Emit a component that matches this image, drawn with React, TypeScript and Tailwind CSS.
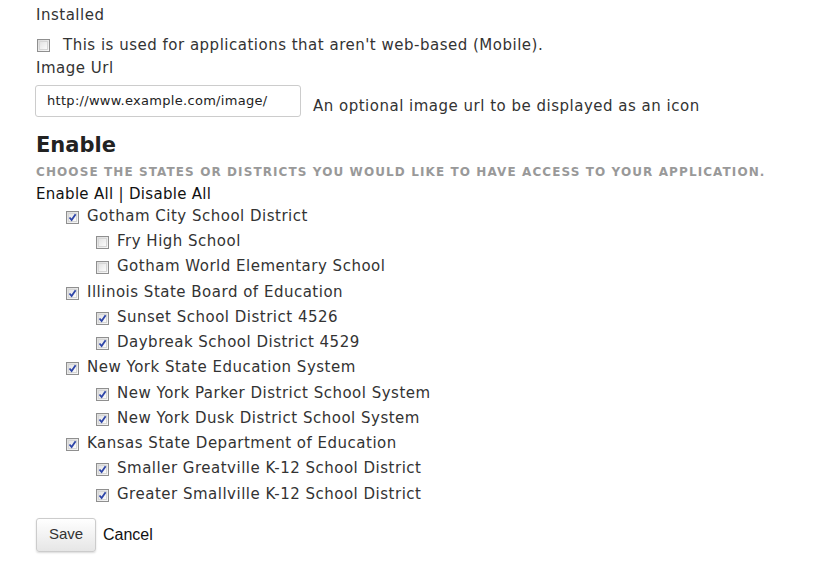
import React, { useState } from "react";

type School = { name: string; on: boolean };
type Group = { name: string; on: boolean; children: School[] };

const initialGroups: Group[] = [
  {
    name: "Gotham City School District",
    on: true,
    children: [
      { name: "Fry High School", on: false },
      { name: "Gotham World Elementary School", on: false },
    ],
  },
  {
    name: "Illinois State Board of Education",
    on: true,
    children: [
      { name: "Sunset School District 4526", on: true },
      { name: "Daybreak School District 4529", on: true },
    ],
  },
  {
    name: "New York State Education System",
    on: true,
    children: [
      { name: "New York Parker District School System", on: true },
      { name: "New York Dusk District School System", on: true },
    ],
  },
  {
    name: "Kansas State Department of Education",
    on: true,
    children: [
      { name: "Smaller Greatville K-12 School District", on: true },
      { name: "Greater Smallville K-12 School District", on: true },
    ],
  },
];

function Box({ checked, onClick }: { checked: boolean; onClick?: () => void }) {
  return (
    <span
      onClick={onClick}
      className="relative inline-flex h-[13px] w-[13px] shrink-0 cursor-default items-center justify-center border border-[#8f8f8f] bg-gradient-to-br from-[#dcdcdc] to-[#f8f8f8] p-[1px]"
    >
      <span className="block h-full w-full border border-[#d6d6d6] bg-gradient-to-br from-[#e4e4e4] to-[#fbfbfb]" />
      {checked && (
        <svg className="absolute left-[1px] top-[1px] h-[9px] w-[9px]" viewBox="0 0 9 9">
          <path d="M1.5 4.5 L3.6 7 L7.6 1.2" fill="none" stroke="#2e45a8" strokeWidth={1.8} />
        </svg>
      )}
    </span>
  );
}

export default function App() {
  const [installed, setInstalled] = useState(false);
  const [groups, setGroups] = useState<Group[]>(initialGroups);

  const setAll = (on: boolean) =>
    setGroups(groups.map((g) => ({ ...g, on, children: g.children.map((c) => ({ ...c, on })) })));

  const toggleGroup = (gi: number) =>
    setGroups(groups.map((g, i) => (i === gi ? { ...g, on: !g.on } : g)));

  const toggleChild = (gi: number, ci: number) =>
    setGroups(
      groups.map((g, i) =>
        i === gi
          ? { ...g, children: g.children.map((c, j) => (j === ci ? { ...c, on: !c.on } : c)) }
          : g
      )
    );

  return (
    <div className="min-h-[566px] bg-white pl-[36px] pt-[5px] font-['DejaVu_Sans',Verdana,sans-serif] text-[15px] tracking-[0.5px] text-[#333]">
      <div className="h-[20px] leading-[20px]">Installed</div>
      <div className="mt-[10px] flex h-[20px] items-center">
        <span className="ml-[1px]">
          <Box checked={installed} onClick={() => setInstalled(!installed)} />
        </span>
        <span className="ml-[13px] leading-[20px]">
          This is used for applications that aren't web-based (Mobile).
        </span>
      </div>
      <div className="mt-[3px] h-[20px] leading-[20px]">Image Url</div>

      <div className="mt-[6px] flex items-center">
        <input
          defaultValue="http://www.example.com/image/"
          className="-ml-[1px] h-[32px] w-[266px] rounded-[3px] border border-[#ccc] px-[11px] font-['DejaVu_Sans',Verdana,sans-serif] text-[13px] tracking-[0.3px] text-[#222] outline-none"
        />
        <span className="ml-[12px] mt-[11px] text-[#333]">An optional image url to be displayed as an icon</span>
      </div>

      <h2 className="mt-[14px] h-[26px] text-[21px] font-bold leading-[26px] tracking-normal text-[#222]">Enable</h2>
      <div className="mt-[6px] h-[16px] text-[12px] font-bold uppercase leading-[16px] tracking-[1.1px] text-[#999]">
        Choose the states or districts you would like to have access to your application.
      </div>
      <div className="mt-[4px] h-[20px] leading-[20px] tracking-[0.3px] text-[#111]">
        <span className="cursor-pointer" onClick={() => setAll(true)}>
          Enable All
        </span>{" "}
        |{" "}
        <span className="cursor-pointer" onClick={() => setAll(false)}>
          Disable All
        </span>
      </div>

      <div className="flex flex-col">
        {groups.map((g, gi) => (
          <div key={g.name} className="flex flex-col">
            <div className="flex h-[25.25px] items-center pl-[30px]">
              <span className="mt-[2px]">
                <Box checked={g.on} onClick={() => toggleGroup(gi)} />
              </span>
              <span className="ml-[8px]">{g.name}</span>
            </div>
            {g.children.map((c, ci) => (
              <div key={c.name} className="flex h-[25.25px] items-center pl-[60px]">
                <span className="mt-[2px]">
                  <Box checked={c.on} onClick={() => toggleChild(gi, ci)} />
                </span>
                <span className="ml-[8px]">{c.name}</span>
              </div>
            ))}
          </div>
        ))}
      </div>

      <div className="mt-[11px] flex items-center">
        <button className="h-[34px] w-[60px] rounded-[3px] border border-[#ccc] bg-gradient-to-b from-white to-[#e6e6e6] font-['Liberation_Sans',Arial,sans-serif] text-[15px] tracking-normal text-[#333] shadow-[0_1px_2px_rgba(0,0,0,0.15)]">
          Save
        </button>
        <span className="ml-[7px] font-['Liberation_Sans',Arial,sans-serif] text-[16px] tracking-normal text-[#111]">Cancel</span>
      </div>
    </div>
  );
}
